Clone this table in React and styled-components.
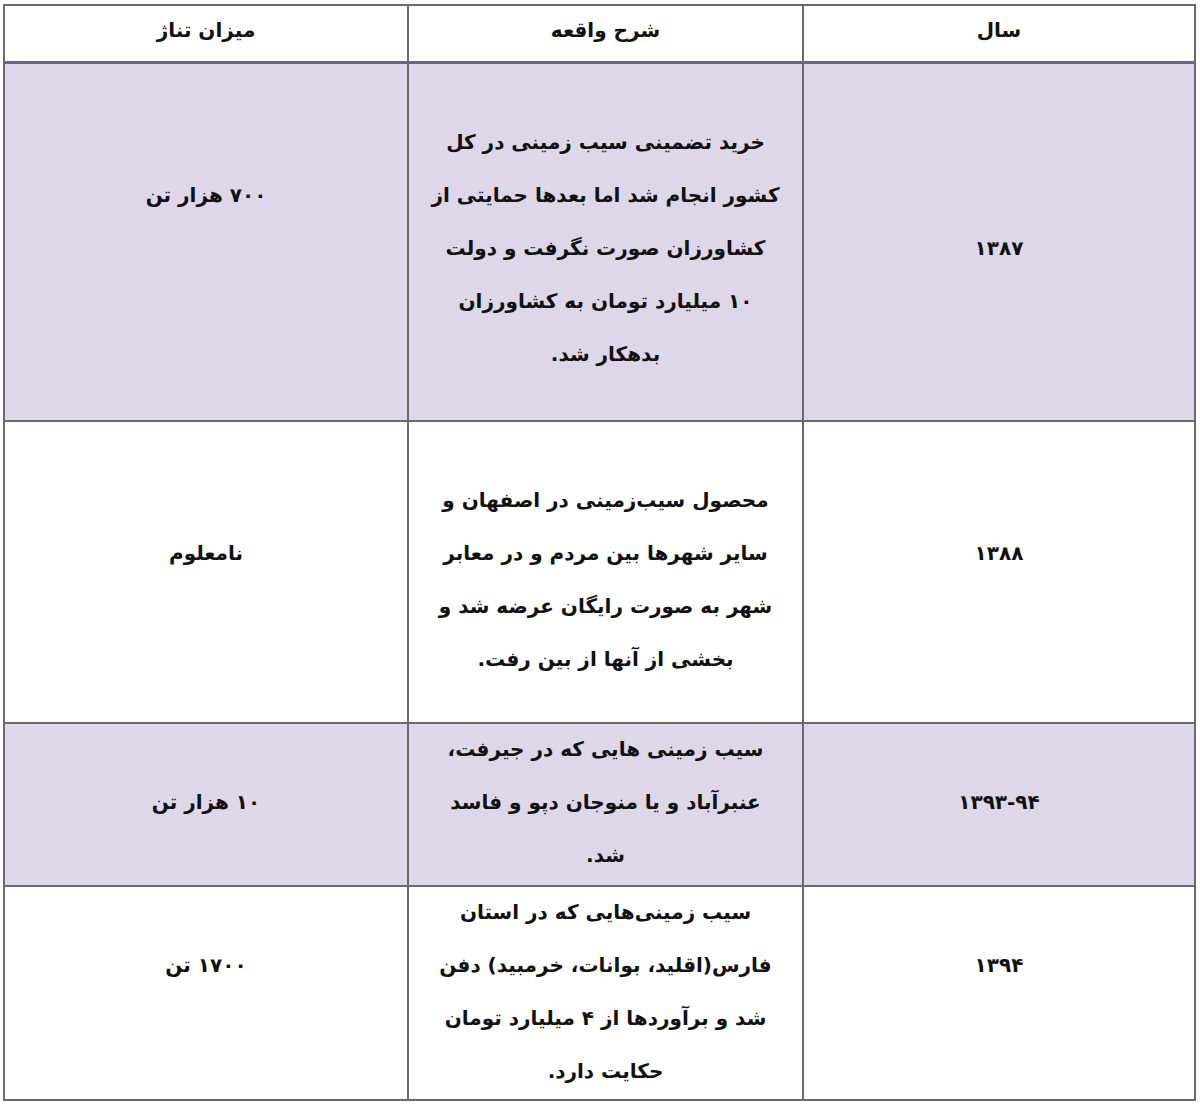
import React from "react";
import styled, { createGlobalStyle } from "styled-components";

const LINE = 53;

const rows = [
  {
    year: "۱۳۸۷",
    yearPad: 3,
    desc: [
      "خرید تضمینی سیب زمینی در کل",
      "کشور انجام شد اما بعدها حمایتی از",
      "کشاورزان  صورت نگرفت و دولت",
      "۱۰ میلیارد تومان  به کشاورزان",
      "بدهکار شد.",
    ],
    descPad: 1,
    amount: "۷۰۰ هزار تن",
    amountPad: 2,
    height: 358,
    shaded: true,
  },
  {
    year: "۱۳۸۸",
    yearPad: 2,
    desc: [
      "محصول سیب‌زمینی در اصفهان  و",
      "سایر شهرها  بین مردم و در معابر",
      "شهر به صورت رایگان عرضه شد و",
      "بخشی از آنها از بین رفت.",
    ],
    descPad: 1,
    amount: "نامعلوم",
    amountPad: 2,
    height: 302,
    shaded: false,
  },
  {
    year: "۱۳۹۳-۹۴",
    yearPad: 1,
    desc: [
      "سیب زمینی هایی که در جیرفت،",
      "عنبرآباد و یا منوجان دپو و فاسد",
      "شد.",
    ],
    descPad: 0,
    amount: "۱۰ هزار تن",
    amountPad: 1,
    height: 163,
    shaded: true,
  },
  {
    year: "۱۳۹۴",
    yearPad: 1,
    desc: [
      "سیب زمینی‌هایی که در استان",
      "فارس(اقلید، بوانات، خرمبید) دفن",
      "شد و برآوردها از ۴ میلیارد تومان",
      "حکایت دارد.",
    ],
    descPad: 0,
    amount: "۱۷۰۰ تن",
    amountPad: 1,
    height: 212,
    shaded: false,
  },
];

const GlobalStyle = createGlobalStyle`
  body {
    margin: 0;
    background: #ffffff;
  }
`;

const Page = styled.div`
  padding: 4px 0 0 3px;
`;

const Table = styled.table`
  direction: rtl;
  width: 1191px;
  border-collapse: collapse;
  table-layout: fixed;
  font-family: "DejaVu Sans", sans-serif;
  font-weight: bold;
  font-size: 20px;
  color: #111111;
`;

const HeadCell = styled.th`
  height: 47px;
  padding: 0 0 8px;
  text-align: center;
  vertical-align: middle;
  border: 2px solid #6a6a6a;
  border-bottom: 3px solid #6b5f9c;
  font-weight: bold;
  line-height: 40px;
`;

const Row = styled.tr`
  height: ${(p) => p.$height}px;
  background: ${(p) => (p.$shaded ? "#ddd7e9" : "#ffffff")};
`;

const Cell = styled.td`
  padding: ${(p) => p.$pad * LINE}px 0 0;
  text-align: center;
  vertical-align: top;
  border: 2px solid #6a6a6a;
  white-space: nowrap;
`;

const Line = styled.div`
  height: ${LINE}px;
  line-height: 50px;
`;

export default function App() {
  return (
    <Page>
      <GlobalStyle />
      <Table>
        <colgroup>
          <col style={{ width: 392 }} />
          <col style={{ width: 395 }} />
          <col style={{ width: 404 }} />
        </colgroup>
        <thead>
          <tr>
            <HeadCell>سال</HeadCell>
            <HeadCell>شرح واقعه</HeadCell>
            <HeadCell>میزان تناژ</HeadCell>
          </tr>
        </thead>
        <tbody>
          {rows.map((r) => (
            <Row key={r.year} $height={r.height} $shaded={r.shaded}>
              <Cell $pad={r.yearPad}>
                <Line>{r.year}</Line>
              </Cell>
              <Cell $pad={r.descPad}>
                {r.desc.map((line, i) => (
                  <Line key={i}>{line}</Line>
                ))}
              </Cell>
              <Cell $pad={r.amountPad}>
                <Line>{r.amount}</Line>
              </Cell>
            </Row>
          ))}
        </tbody>
      </Table>
    </Page>
  );
}
